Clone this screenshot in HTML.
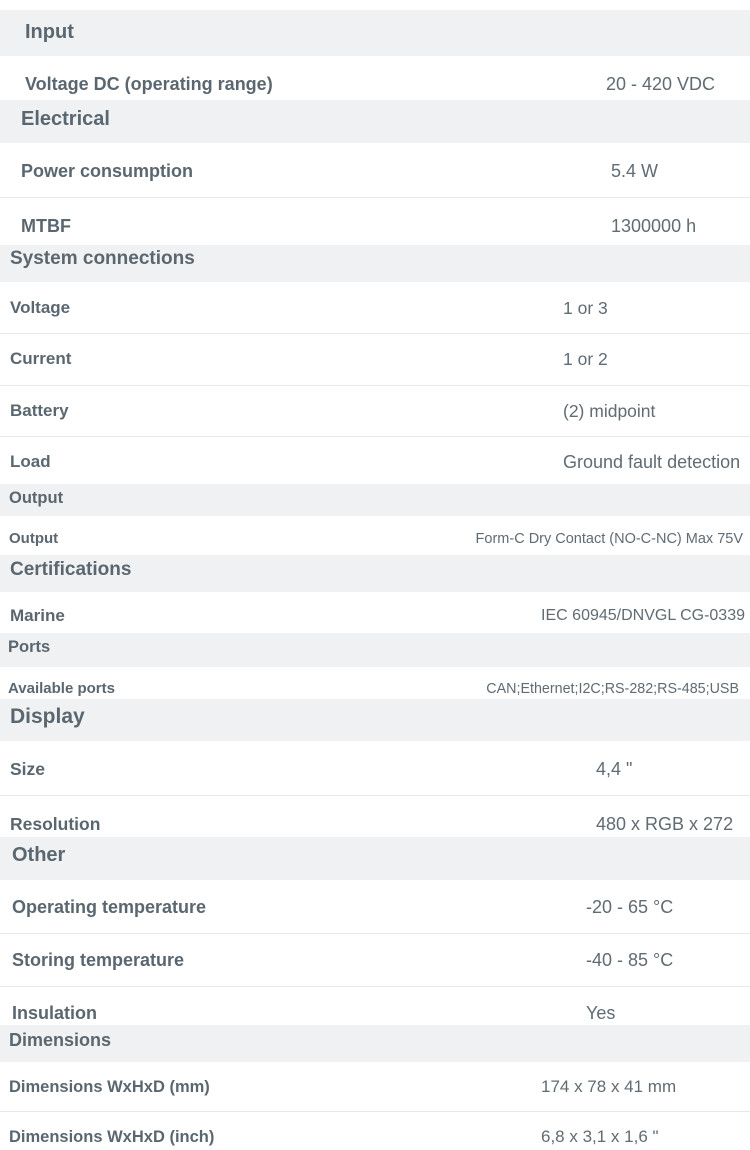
<!DOCTYPE html>
<html><head><meta charset="utf-8"><style>
body{margin:0;width:750px;height:1150px;background:#fff;position:relative;overflow:hidden;font-family:"Liberation Sans",sans-serif;color:#5b6770}
.b{position:absolute;left:0;width:750px;background:#f0f1f2}
.l{position:absolute;left:0;width:750px;height:1px;background:#e6e8ea}
.t{position:absolute;white-space:nowrap;line-height:20px;height:20px}
.h{font-weight:bold}
.k{font-weight:bold}
.v{color:#606b73}
.r{text-align:right}
</style></head><body>
<div class="b" style="top:10px;height:46px"></div>
<div class="b" style="top:100px;height:43px"></div>
<div class="b" style="top:245px;height:37px"></div>
<div class="b" style="top:484px;height:32px"></div>
<div class="b" style="top:555px;height:37px"></div>
<div class="b" style="top:633px;height:34px"></div>
<div class="b" style="top:699px;height:42px"></div>
<div class="b" style="top:837px;height:43px"></div>
<div class="b" style="top:1025px;height:37px"></div>
<div class="l" style="top:197px"></div>
<div class="l" style="top:333px"></div>
<div class="l" style="top:385px"></div>
<div class="l" style="top:436px"></div>
<div class="l" style="top:795px"></div>
<div class="l" style="top:933px"></div>
<div class="l" style="top:986px"></div>
<div class="l" style="top:1111px"></div>

<div class="t h" style="left:25px;top:22px;font-size:20px">Input</div>
<div class="t k" style="left:25px;top:74px;font-size:18px">Voltage DC (operating range)</div>
<div class="t v" style="left:606px;top:74px;font-size:18px">20 - 420 VDC</div>
<div class="t h" style="left:21px;top:109px;font-size:20px">Electrical</div>
<div class="t k" style="left:21px;top:161px;font-size:18px">Power consumption</div>
<div class="t v" style="left:611px;top:161px;font-size:18px">5.4 W</div>
<div class="t k" style="left:21px;top:216px;font-size:18px">MTBF</div>
<div class="t v" style="left:611px;top:216px;font-size:18px">1300000 h</div>
<div class="t h" style="left:10px;top:249px;font-size:19px">System connections</div>
<div class="t k" style="left:10px;top:298px;font-size:17px">Voltage</div>
<div class="t v" style="left:563px;top:298px;font-size:17.5px">1 or 3</div>
<div class="t k" style="left:10px;top:349px;font-size:17px">Current</div>
<div class="t v" style="left:563px;top:349px;font-size:17.5px">1 or 2</div>
<div class="t k" style="left:10px;top:401px;font-size:17px">Battery</div>
<div class="t v" style="left:563px;top:401px;font-size:17.5px">(2) midpoint</div>
<div class="t k" style="left:10px;top:452px;font-size:17px">Load</div>
<div class="t v" style="left:563px;top:452px;font-size:18px">Ground fault detection</div>
<div class="t h" style="left:9px;top:488px;font-size:16.5px">Output</div>
<div class="t k" style="left:9px;top:529px;font-size:15px">Output</div>
<div class="t v r" style="right:7px;top:529px;font-size:14.5px">Form-C Dry Contact (NO-C-NC) Max 75V</div>
<div class="t h" style="left:10px;top:560px;font-size:19px">Certifications</div>
<div class="t k" style="left:10px;top:606px;font-size:17px">Marine</div>
<div class="t v r" style="right:5px;top:606px;font-size:16px">IEC 60945/DNVGL CG-0339</div>
<div class="t h" style="left:8px;top:637px;font-size:16.5px">Ports</div>
<div class="t k" style="left:8px;top:679px;font-size:15px">Available ports</div>
<div class="t v r" style="right:11px;top:679px;font-size:14.3px">CAN;Ethernet;I2C;RS-282;RS-485;USB</div>
<div class="t h" style="left:10px;top:707px;font-size:21px">Display</div>
<div class="t k" style="left:10px;top:759px;font-size:17.5px">Size</div>
<div class="t v" style="left:596px;top:759px;font-size:18px">4,4 "</div>
<div class="t k" style="left:10px;top:814px;font-size:17.5px">Resolution</div>
<div class="t v" style="left:596px;top:814px;font-size:18px">480 x RGB x 272</div>
<div class="t h" style="left:12px;top:845px;font-size:20px">Other</div>
<div class="t k" style="left:12px;top:897px;font-size:18px">Operating temperature</div>
<div class="t v" style="left:586px;top:897px;font-size:18px">-20 - 65 °C</div>
<div class="t k" style="left:12px;top:950px;font-size:18px">Storing temperature</div>
<div class="t v" style="left:586px;top:950px;font-size:18px">-40 - 85 °C</div>
<div class="t k" style="left:12px;top:1003px;font-size:18px">Insulation</div>
<div class="t v" style="left:586px;top:1003px;font-size:18px">Yes</div>
<div class="t h" style="left:9px;top:1030px;font-size:18px">Dimensions</div>
<div class="t k" style="left:9px;top:1077px;font-size:16.5px">Dimensions WxHxD (mm)</div>
<div class="t v" style="left:541px;top:1077px;font-size:17px">174 x 78 x 41 mm</div>
<div class="t k" style="left:9px;top:1127px;font-size:16.5px">Dimensions WxHxD (inch)</div>
<div class="t v" style="left:541px;top:1127px;font-size:17px">6,8 x 3,1 x 1,6 "</div>
</body></html>
